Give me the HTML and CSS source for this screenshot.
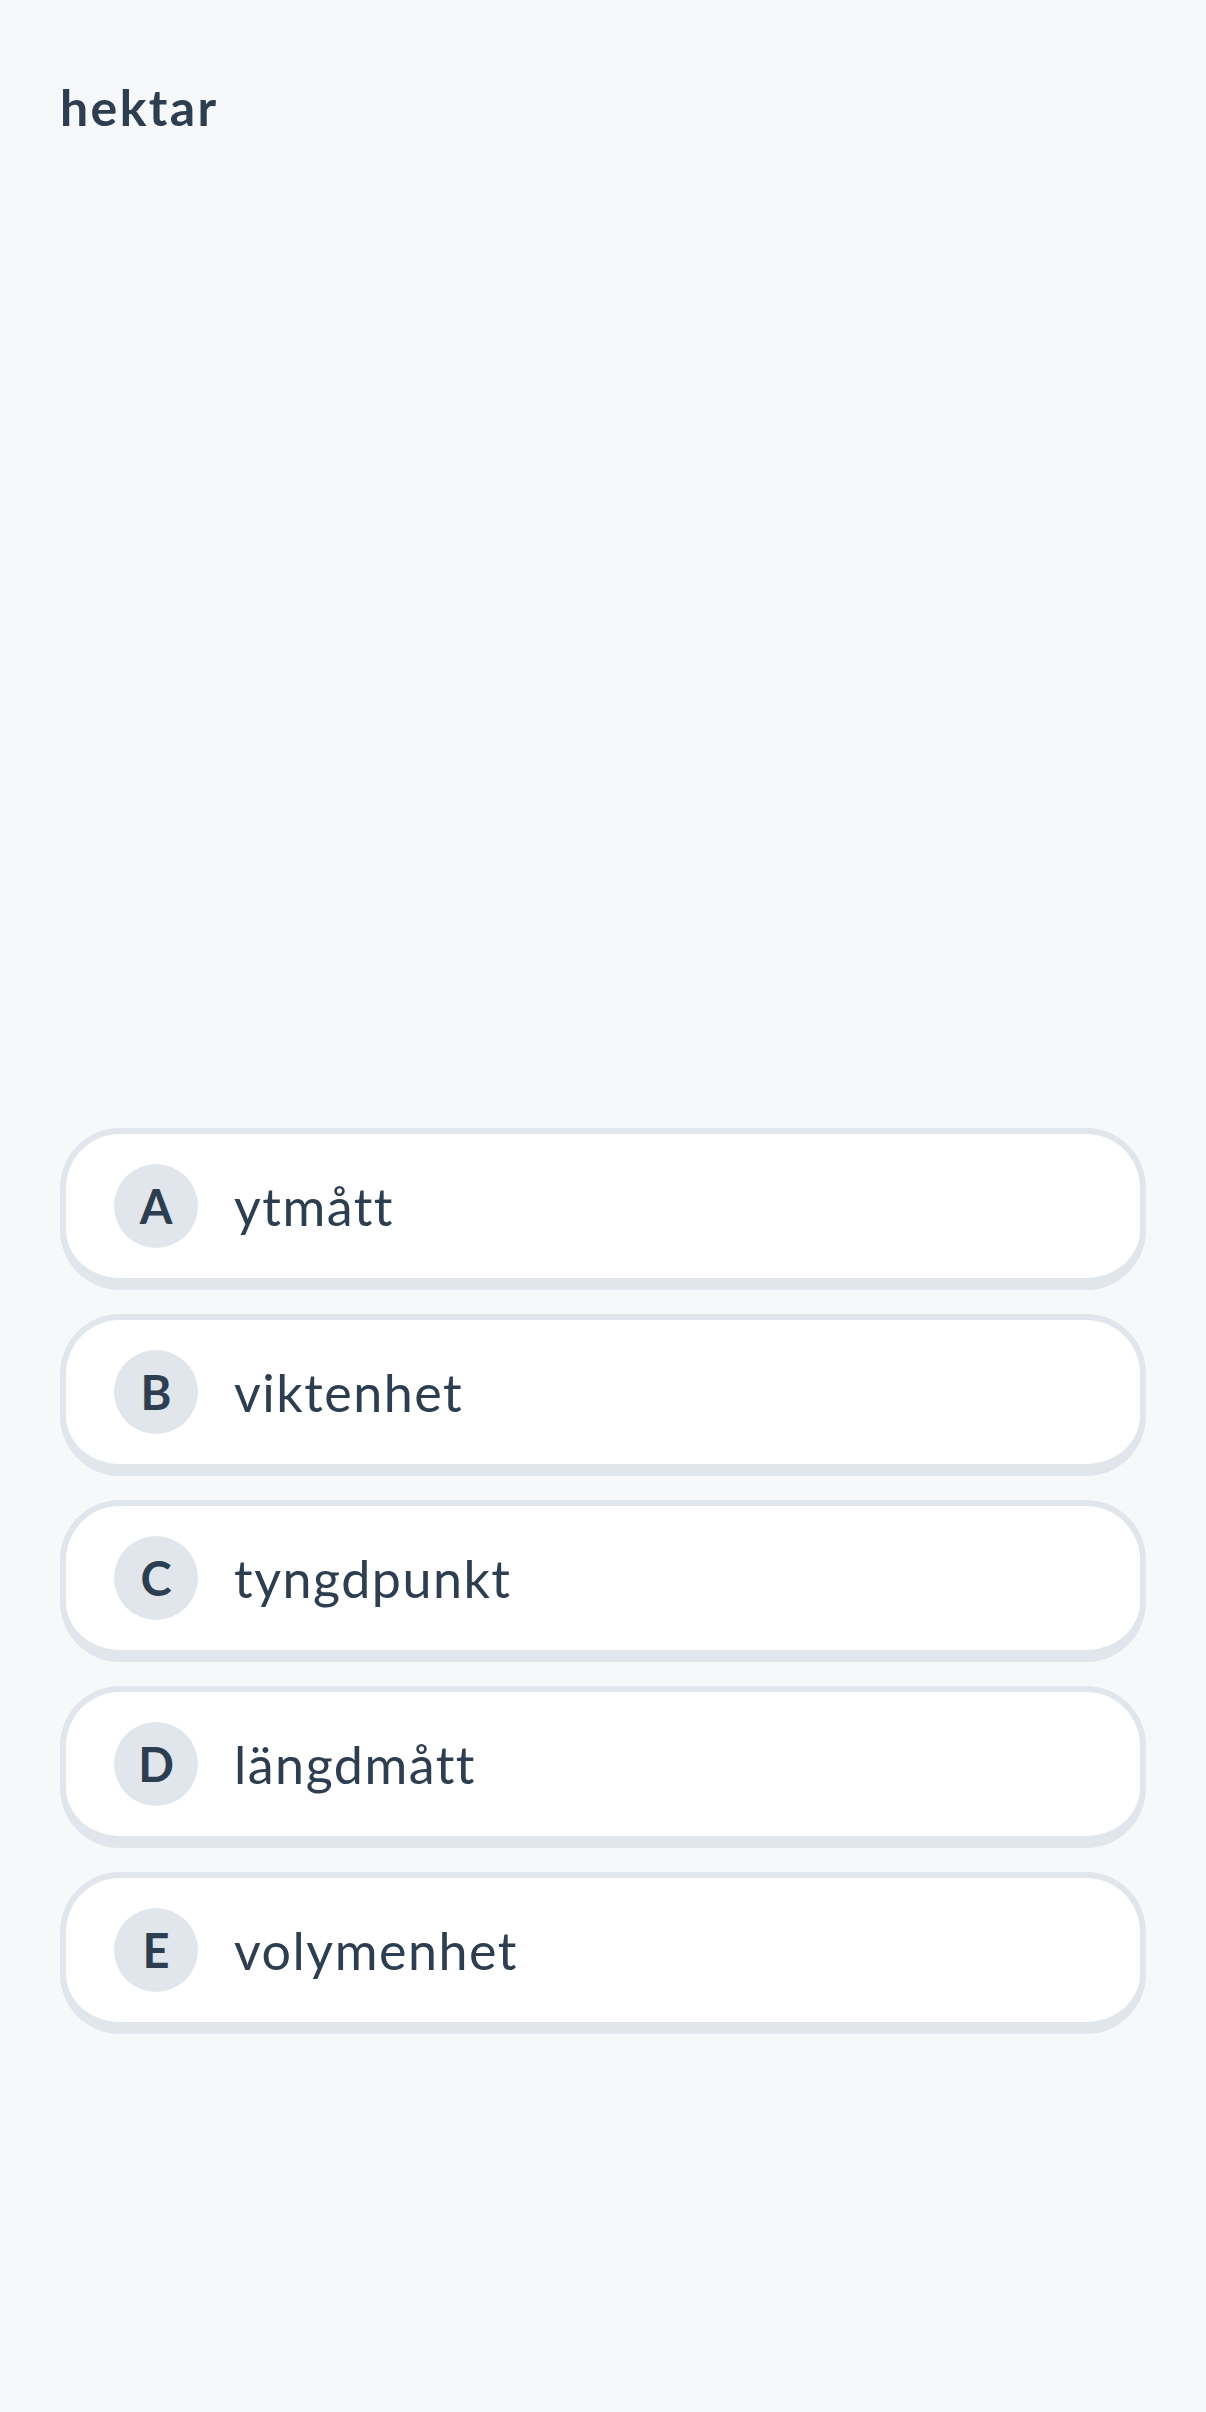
FILE: index.html
```html
<!DOCTYPE html>
<html lang="sv">
<head>
<meta charset="utf-8">
<title>hektar</title>
<link rel="stylesheet" href="styles.css">
</head>
<body>
<main class="page">
  <h1 class="term">hektar</h1>
  <ul class="options">
    <li class="option"><span class="letter">A</span><span class="label">ytmått</span></li>
    <li class="option"><span class="letter">B</span><span class="label">viktenhet</span></li>
    <li class="option"><span class="letter">C</span><span class="label">tyngdpunkt</span></li>
    <li class="option"><span class="letter">D</span><span class="label">längdmått</span></li>
    <li class="option"><span class="letter">E</span><span class="label">volymenhet</span></li>
  </ul>
</main>
</body>
</html>
```

FILE: styles.css
```css
html, body {
  margin: 0;
  padding: 0;
  background: #f7f8fa;
}
body {
  font-family: Lato, "Open Sans", sans-serif;
  color: #2c3e50;
}
.page {
  padding: 79px 60px 0 60px;
  min-height: 2412px;
  box-sizing: border-box;
}
.term {
  margin: 0;
  font-size: 50px;
  line-height: 57.6px;
  font-weight: 700;
  letter-spacing: 2.4px;
  color: #2c3e50;
}
.options {
  list-style: none;
  margin: 991px 0 0 0;
  padding: 0;
  display: flex;
  flex-direction: column;
  gap: 24px;
}
.option {
  display: flex;
  align-items: center;
  gap: 36px;
  height: 162px;
  box-sizing: border-box;
  padding: 0 48px;
  background: #ffffff;
  border: 6px solid #e1e6ec;
  border-bottom-width: 12px;
  border-radius: 60px;
}
.letter {
  flex: 0 0 auto;
  width: 84px;
  height: 84px;
  border-radius: 50%;
  background: #e1e6ec;
  display: flex;
  align-items: center;
  justify-content: center;
  font-size: 47px;
  font-weight: 700;
  color: #2c3e50;
}
.label {
  font-size: 52px;
  font-weight: 400;
  letter-spacing: 1.5px;
  color: #2c3e50;
}
```
